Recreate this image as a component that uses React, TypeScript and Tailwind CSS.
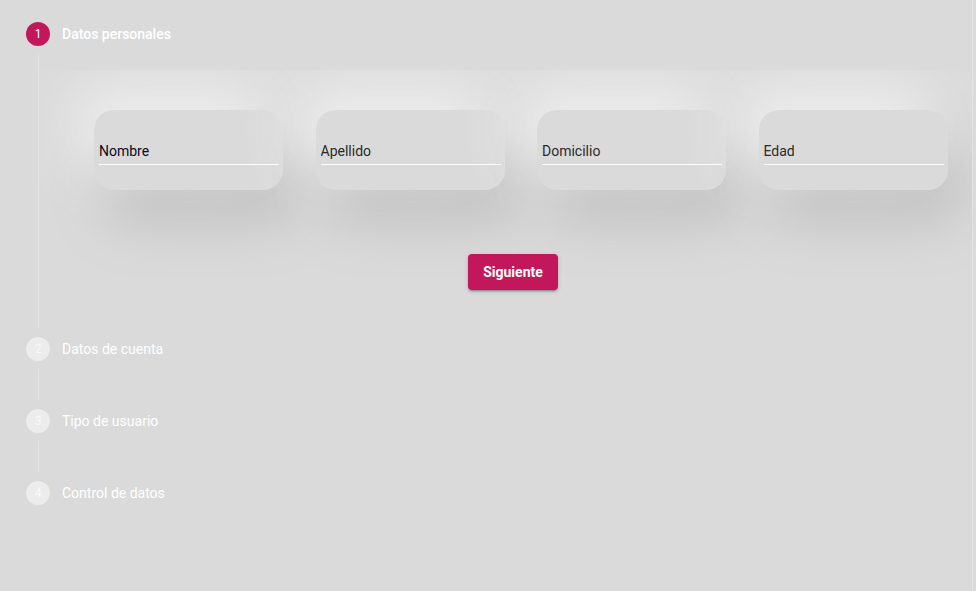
import React from 'react';

const CAMPOS = ['Nombre', 'Apellido', 'Domicilio', 'Edad'];

const PASOS = ['Datos personales', 'Datos de cuenta', 'Tipo de usuario', 'Control de datos'];

// ── Ícono del paso: activo = rosa, inactivo = blanco translúcido ──
function StepIcon({ n, active }: { n: number; active?: boolean }) {
  return (
    <div
      className={`w-6 h-6 rounded-full flex items-center justify-center text-[12px] leading-none shrink-0 ${
        active ? 'bg-[#c2185b] text-white' : 'bg-[#ececec] text-[#f9f9f9]'
      }`}
    >
      {n}
    </div>
  );
}

function StepLabel({ n, label, active }: { n: number; label: string; active?: boolean }) {
  return (
    <div className="flex items-center h-[40px]">
      <StepIcon n={n} active={active} />
      <span className={`ml-3 text-[14px] text-white ${active ? 'font-medium' : 'font-normal'}`}>{label}</span>
    </div>
  );
}

function Campo({ label }: { label: string }) {
  return (
    <div className="w-[189px] h-[80px] shrink-0 rounded-[20px] bg-[#dadada] pt-[28px] pl-[5px] pr-[4px] shadow-[-18px_-22px_60px_#f0f0f0,12px_30px_55px_#bdbdbd]">
      <input
        placeholder={label}
        className={`w-full h-[27px] bg-transparent border-b border-white outline-none text-[14px] ${
          label === 'Nombre' ? 'placeholder:text-[#0a0a1a]' : 'placeholder:text-[#2a2a2a]'
        }`}
      />
    </div>
  );
}

export default function App() {
  return (
    <div className="w-full h-[591px] bg-[#dadada] overflow-hidden" style={{ fontFamily: 'Roboto, "Liberation Sans", sans-serif' }}>
      <div className="w-[973px] h-full border-r border-[#e2e2e2] pl-[26px] pt-[14px]">
        {/* Paso 1 activo */}
        <StepLabel n={1} label={PASOS[0]} active />
        <div className="ml-[12px] border-l border-[#e3e3e3] pt-[16px] pb-[23px]">
          <div className="overflow-hidden pb-[16px]">
            <div className="flex gap-[32.5px] pl-[55px] pt-[40px]">
              {CAMPOS.map((c) => (
                <Campo key={c} label={c} />
              ))}
            </div>
            <div className="flex justify-center pl-[15px] mt-[64px]">
              <button
                type="button"
                className="w-[90px] h-[36px] rounded-[4px] bg-[#c2185b] text-white text-[14px] font-bold shadow-[0_3px_1px_-2px_rgba(0,0,0,0.2),0_2px_2px_0_rgba(0,0,0,0.14),0_1px_5px_0_rgba(0,0,0,0.12)]"
              >
                Siguiente
              </button>
            </div>
          </div>
        </div>

        {/* Pasos siguientes */}
        {PASOS.slice(1).map((p, i) => (
          <div key={p}>
            {i > 0 && <div className="ml-[12px] border-l border-[#e3e3e3] h-[32px]" />}
            <StepLabel n={i + 2} label={p} />
          </div>
        ))}
      </div>
    </div>
  );
}
